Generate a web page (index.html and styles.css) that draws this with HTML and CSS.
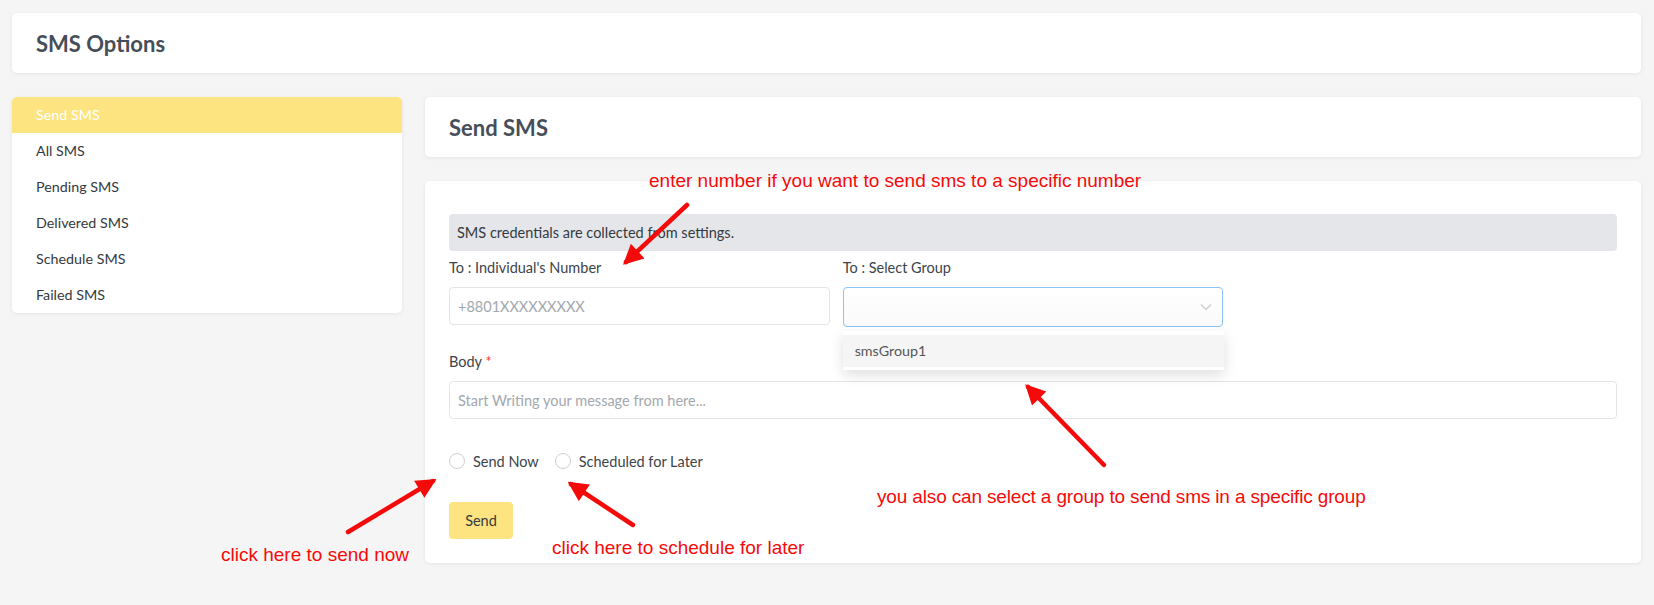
FILE: index.html
```html
<!DOCTYPE html>
<html lang="en">
<head>
<meta charset="utf-8">
<title>SMS Options</title>
<link rel="stylesheet" href="styles.css">
</head>
<body>
  <header class="card topbar"><h1 class="title">SMS Options</h1></header>

  <div class="layout">
    <nav class="card sidebar">
      <a class="nav-item active">Send SMS</a>
      <a class="nav-item">All SMS</a>
      <a class="nav-item">Pending SMS</a>
      <a class="nav-item">Delivered SMS</a>
      <a class="nav-item">Schedule SMS</a>
      <a class="nav-item">Failed SMS</a>
    </nav>

    <main class="main">
      <div class="card main-header"><h2 class="title">Send SMS</h2></div>

      <section class="card form-card">
        <div class="notice">SMS credentials are collected from settings.</div>

        <div class="row">
          <div class="field">
            <label class="label">To : Individual's Number</label>
            <div class="input"><span class="placeholder">+8801XXXXXXXXX</span></div>
          </div>
          <div class="field">
            <label class="label">To : Select Group</label>
            <div class="select-wrap">
              <div class="input select">
                <svg class="chev" width="12" height="8" viewBox="0 0 12 8"><path d="M1 1.5 L6 6.5 L11 1.5" fill="none" stroke="#c8c8c8" stroke-width="1.2"/></svg>
              </div>
              <div class="dropdown"><div class="dd-item">smsGroup1</div></div>
            </div>
          </div>
        </div>

        <div class="field body-field">
          <label class="label">Body <span class="req">*</span></label>
          <div class="input"><span class="placeholder">Start Writing your message from here...</span></div>
        </div>

        <div class="radios">
          <label class="radio"><span class="circle"></span>Send Now</label>
          <label class="radio"><span class="circle"></span>Scheduled for Later</label>
        </div>

        <button class="btn">Send</button>
      </section>
    </main>
  </div>

  <svg class="arrows" width="1654" height="605" viewBox="0 0 1654 605">
    <defs>
      <marker id="head" viewBox="0 0 10 10" refX="8" refY="5" markerUnits="userSpaceOnUse" markerWidth="24" markerHeight="20" orient="auto">
        <path d="M0 0 L10 5 L0 10 Z" fill="#f50a0a"/>
      </marker>
    </defs>
    <g stroke="#f50a0a" stroke-width="4.5" stroke-linecap="round" marker-end="url(#head)">
      <line x1="687" y1="205" x2="626" y2="262"/>
      <line x1="1104" y1="465" x2="1028" y2="387"/>
      <line x1="348" y1="532" x2="433" y2="481"/>
      <line x1="633" y1="525" x2="571" y2="484"/>
    </g>
  </svg>

  <p class="note note-number">enter number if you want to send sms to a specific number</p>
  <p class="note note-group">you also can select a group to send sms in a specific group</p>
  <p class="note note-now">click here to send now</p>
  <p class="note note-later">click here to schedule for later</p>
</body>
</html>
```

FILE: styles.css
```css
* { box-sizing: border-box; }

html, body { height: 100%; }

body {
  margin: 0;
  padding: 13px 13px 12px 12px;
  background: #f5f5f5;
  font-family: "Lato", "Noto Sans", sans-serif;
  font-size: 14px;
  color: #343a40;
  overflow: hidden;
}

.card {
  background: #fff;
  border-radius: 5px;
  box-shadow: 0 1px 4px rgba(0, 0, 0, 0.07);
}

.title {
  margin: 0;
  font-size: 22px;
  font-weight: 700;
  color: #464e59;
}

.topbar {
  height: 60px;
  display: flex;
  align-items: center;
  padding: 0 24px;
}

.layout {
  display: flex;
  gap: 23px;
  margin-top: 24px;
  align-items: flex-start;
}

.sidebar {
  width: 390px;
  flex: none;
  display: flex;
  flex-direction: column;
  overflow: hidden;
}

.nav-item {
  height: 36px;
  line-height: 36px;
  padding: 0 24px;
  color: #343a40;
  font-size: 14.3px;
}

.nav-item.active {
  background: #fee480;
  color: #fff;
}

.main {
  flex: 1;
  display: flex;
  flex-direction: column;
  gap: 24px;
}

.main-header {
  height: 60px;
  display: flex;
  align-items: center;
  padding: 0 24px;
}

.form-card {
  padding: 33px 24px 24px;
}

.notice {
  height: 37px;
  display: flex;
  align-items: center;
  padding: 0 8px;
  background: #e5e6ea;
  border-radius: 4px;
  color: #343a40;
  font-size: 14.5px;
}

.row {
  display: grid;
  grid-template-columns: repeat(3, 1fr);
  column-gap: 13px;
  margin-top: 7px;
}

.field { display: flex; flex-direction: column; }

.label {
  line-height: 20px;
  font-size: 14.5px;
  color: #3d434a;
  margin-bottom: 9px;
}

.req { color: #ee3b3b; }

.input {
  height: 38px;
  border: 1px solid #e3e4e6;
  border-radius: 4px;
  display: flex;
  align-items: center;
  padding: 0 8px;
  background: #fff;
}

.placeholder { color: #a3a7ad; font-size: 14.5px; }

.select-wrap { position: relative; }

.select {
  height: 40px;
  border-color: #8cc2f7;
  justify-content: flex-end;
  padding-right: 10px;
  background: linear-gradient(#fff, #fafafa);
}

.dropdown {
  position: absolute;
  top: 44px;
  left: 0;
  right: -1px;
  padding: 4px 0 3px;
  background: #fff;
  box-shadow: 0 5px 14px rgba(0, 0, 0, 0.13);
  z-index: 2;
}

.dd-item {
  height: 32px;
  line-height: 32px;
  padding: 0 12px;
  background: #f5f5f5;
  color: #555;
  font-size: 14.3px;
}

.body-field { margin-top: 25px; }

.radios {
  display: flex;
  gap: 16px;
  margin-top: 32px;
  height: 20px;
  align-items: center;
}

.radio {
  display: flex;
  align-items: center;
  gap: 8px;
  color: #3d434a;
  font-size: 14.5px;
}

.circle {
  width: 16px;
  height: 16px;
  border: 1px solid #d0d0d0;
  border-radius: 50%;
  background: #fff;
}

.btn {
  display: block;
  margin-top: 31px;
  width: 64px;
  height: 37px;
  border: none;
  border-radius: 4px;
  background: #fee480;
  color: #343a40;
  font-family: inherit;
  font-size: 14.5px;
}

.arrows {
  position: absolute;
  left: 0;
  top: 0;
  pointer-events: none;
  z-index: 3;
}

.note {
  position: absolute;
  margin: 0;
  font-family: "Liberation Sans", sans-serif;
  font-size: 19px;
  line-height: 22px;
  color: #f50a0a;
  white-space: nowrap;
  z-index: 4;
}

.note-number { left: 649px; top: 170px; }
.note-group { left: 877px; top: 486px; letter-spacing: -0.15px; }
.note-now { left: 221px; top: 544px; }
.note-later { left: 552px; top: 537px; }
```
